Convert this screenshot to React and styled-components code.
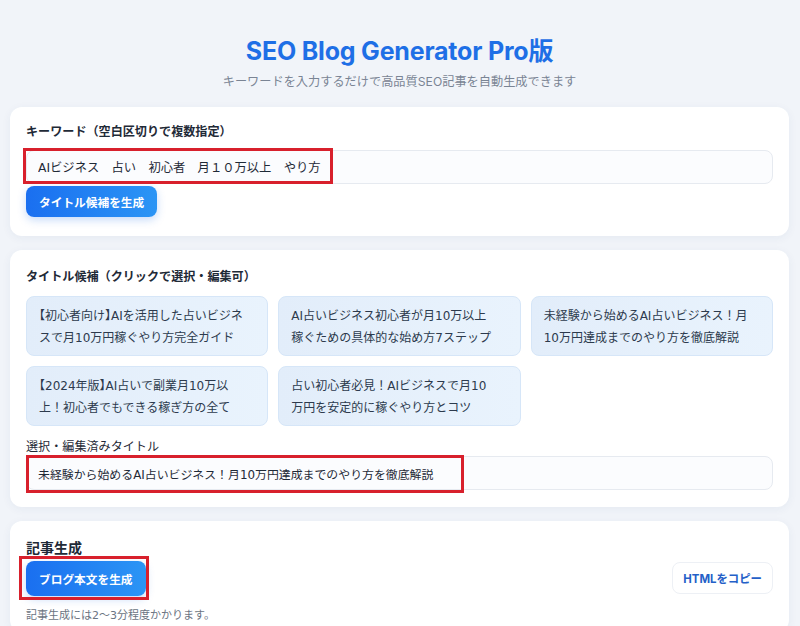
import React, { useState } from 'react'
import styled, { createGlobalStyle } from 'styled-components'

const GlobalStyle = createGlobalStyle`
  body {
    margin: 0;
    background: #f1f4f9;
    font-family: "DejaVu Sans", "Noto Sans CJK JP", sans-serif;
    color: #1f2a37;
  }
`

const Page = styled.div`
  padding: 0 11px 0 10px;
`

const Header = styled.header`
  text-align: center;
  padding-top: 36px;
  padding-bottom: 16px;
`

const Title = styled.h1`
  margin: 0;
  font-family: "Inter", "Noto Sans CJK JP", sans-serif;
  font-size: 25px;
  font-weight: 700;
  color: #1e6fe6;
  letter-spacing: -0.2px;
  line-height: 30px;
`

const Subtitle = styled.p`
  margin: 7px 0 0;
  font-family: "Inter", "Noto Sans CJK JP", sans-serif;
  font-size: 12.2px;
  color: #7a8494;
  line-height: 18px;
`

const Card = styled.section`
  background: #fff;
  border-radius: 12px;
  box-shadow: 0 2px 10px rgba(30, 60, 120, 0.06);
  padding: ${p => p.$pad || '18px 16px 18px'};
  margin-bottom: 14px;
`

const Label = styled.div`
  font-size: ${p => (p.$big ? '14px' : '12.1px')};
  font-weight: ${p => (p.$bold ? 700 : 400)};
  color: #1f2a37;
  line-height: 18px;
  margin-bottom: ${p => p.$mb || '8px'};
`

const FieldWrap = styled.div`
  position: relative;
`

const Field = styled.input`
  display: block;
  box-sizing: border-box;
  width: 100%;
  height: 34px;
  border: 1px solid #e6eaf0;
  border-radius: 8px;
  background: #fbfcfe;
  padding: 0 11px;
  font-family: inherit;
  font-size: ${p => p.$fs || 12.3}px;
  color: #1f2a37;
  outline: none;
`

const Highlight = styled.span`
  position: absolute;
  left: ${p => p.$l}px;
  top: ${p => p.$t}px;
  width: ${p => p.$w}px;
  height: ${p => p.$h}px;
  border: 3px solid #d8202c;
  box-sizing: border-box;
  pointer-events: none;
`

const PrimaryButton = styled.button`
  border: none;
  border-radius: 8px;
  background: linear-gradient(90deg, #1a6ff0 0%, #2b95f5 100%);
  color: #fff;
  font-family: inherit;
  font-weight: 700;
  font-size: 11.7px;
  height: ${p => p.$h || 31}px;
  padding: 0 13px;
  box-shadow: 0 3px 8px rgba(30, 110, 230, 0.25);
  cursor: pointer;
`

const GhostButton = styled.button`
  border: 1px solid #edf0f5;
  border-radius: 8px;
  background: #fff;
  color: #2460c8;
  font-family: "Inter", "Noto Sans CJK JP", sans-serif;
  font-weight: 700;
  font-size: 11.4px;
  height: 32px;
  padding: 0 10px;
  cursor: pointer;
`

const Grid = styled.div`
  display: grid;
  grid-template-columns: repeat(3, 1fr);
  gap: 10px;
  margin-bottom: 12px;
`

const Candidate = styled.div`
  box-sizing: border-box;
  height: 60px;
  border-radius: 8px;
  border: 1px solid #d6e6f8;
  background: linear-gradient(90deg, #e2edfa 0%, #e9f3fd 100%);
  padding: 8px 22.8px 8px 12px;
  font-size: 12px;
  line-height: 22px;
  color: #2c3a4d;
  cursor: pointer;
`

// half-width 【】 like the original rendering
const Punct = styled.span`
  font-feature-settings: "halt";
`

const ActionRow = styled.div`
  display: flex;
  justify-content: space-between;
  align-items: center;
`

const ButtonBox = styled.div`
  position: relative;
  display: inline-block;
  padding: 5px 3px 4px 7px;
  margin-left: -7px;
`

const Note = styled.div`
  font-size: 11px;
  color: #6b7482;
  margin-top: 6px;
`

const candidates = [
  '【初心者向け】AIを活用した占いビジネスで月10万円稼ぐやり方完全ガイド',
  'AI占いビジネス初心者が月10万以上稼ぐための具体的な始め方7ステップ',
  '未経験から始めるAI占いビジネス！月10万円達成までのやり方を徹底解説',
  '【2024年版】AI占いで副業月10万以上！初心者でもできる稼ぎ方の全て',
  '占い初心者必見！AIビジネスで月10万円を安定的に稼ぐやり方とコツ',
]

const tighten = text =>
  text.split(/([【】])/).map((part, i) =>
    part === '【' || part === '】' ? <Punct key={i}>{part}</Punct> : part
  )

export default function App() {
  const [selected, setSelected] = useState(candidates[2])

  return (
    <>
      <GlobalStyle />
      <Page>
        <Header>
          <Title>SEO Blog Generator Pro版</Title>
          <Subtitle>キーワードを入力するだけで高品質SEO記事を自動生成できます</Subtitle>
        </Header>

        <Card $pad="16px 16px 19px">
          <Label $bold $mb="9px">キーワード（空白区切りで複数指定）</Label>
          <FieldWrap>
            <Field defaultValue="AIビジネス　占い　初心者　月１０万以上　やり方" />
            <Highlight $l={-3} $t={-2} $w={310} $h={36} />
          </FieldWrap>
          <PrimaryButton style={{ marginTop: 2 }}>タイトル候補を生成</PrimaryButton>
        </Card>

        <Card $pad="18px 16px 17px">
          <Label $bold $mb="10px">タイトル候補（クリックで選択・編集可）</Label>
          <Grid>
            {candidates.map(c => (
              <Candidate key={c} onClick={() => setSelected(c)}>{tighten(c)}</Candidate>
            ))}
          </Grid>
          <Label $mb="0px">選択・編集済みタイトル</Label>
          <FieldWrap>
            <Field $fs={11.9} value={selected} onChange={e => setSelected(e.target.value)} />
            <Highlight $l={0} $t={-1} $w={438} $h={38} />
          </FieldWrap>
        </Card>

        <Card $pad="18px 16px 10px">
          <Label $bold $big $mb="-1px">記事生成</Label>
          <ActionRow>
            <ButtonBox>
              <PrimaryButton $h={35}>ブログ本文を生成</PrimaryButton>
              <Highlight $l={0} $t={0} $w={130} $h={44} />
            </ButtonBox>
            <GhostButton>HTMLをコピー</GhostButton>
          </ActionRow>
          <Note>記事生成には2〜3分程度かかります。</Note>
        </Card>
      </Page>
    </>
  )
}
